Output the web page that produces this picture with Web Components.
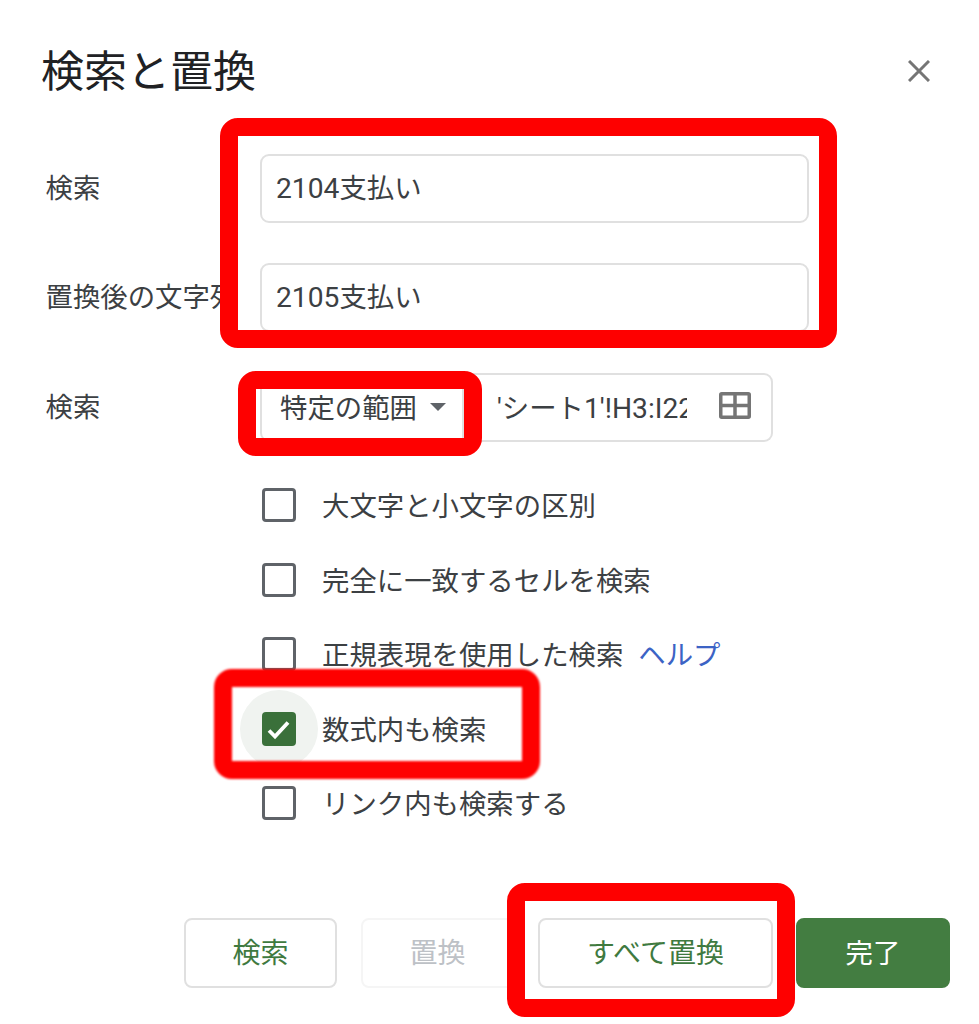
<!DOCTYPE html>
<html lang="ja">
<head>
<meta charset="utf-8">
<title>検索と置換</title>
<style>
html, body { margin: 0; background: #fff; }
body { font-family: Roboto, "Noto Sans CJK JP", sans-serif; font-size: 27.4px; color: #3c4043; }
</style>
</head>
<body>
<find-dialog>
  <span slot="title">検索と置換</span>

  <dlg-field label="検索"><text-box><span style="font-size:28.2px">2104</span>支払い</text-box></dlg-field>
  <dlg-field label="置換後の文字列"><text-box><span style="font-size:28.2px">2105</span>支払い</text-box></dlg-field>
  <dlg-field label="検索" style="margin-top:1px">
    <scope-select>特定の範囲</scope-select>
    <range-box>'シート<span style="font-size:28.2px">1'!H3:I22</span></range-box>
  </dlg-field>

  <check-row slot="checks">大文字と小文字の区別</check-row>
  <check-row slot="checks">完全に一致するセルを検索</check-row>
  <check-row slot="checks">正規表現を使用した検索<help-link>ヘルプ</help-link></check-row>
  <check-row slot="checks" checked>数式内も検索</check-row>
  <check-row slot="checks">リンク内も検索する</check-row>

  <act-button slot="actions" style="--w:153px">検索</act-button>
  <act-button slot="actions" style="--w:153px" kind="disabled">置換</act-button>
  <act-button slot="actions" style="--w:235px">すべて置換</act-button>
  <act-button slot="actions" style="--w:154px;margin-left:-1px" kind="primary">完了</act-button>

  <red-mark slot="marks" style="left:220px;top:118px;width:617px;height:230px"></red-mark>
  <red-mark slot="marks" style="left:238px;top:371px;width:244px;height:85px"></red-mark>
  <red-mark slot="marks" soft style="left:214px;top:669px;width:326px;height:110px"></red-mark>
  <red-mark slot="marks" style="left:507px;top:883px;width:288px;height:134px"></red-mark>
</find-dialog>

<script>
function shadow(el, html) {
  if (!el.shadowRoot) {
    el.attachShadow({ mode: "open" });
    el.shadowRoot.innerHTML = html;
  }
}

class FindDialog extends HTMLElement {
  connectedCallback() {
    shadow(this, `<style>
      :host { display: block; position: relative; z-index: 0; width: 979px; height: 1024px; overflow: hidden; background: #fff; }
      header { height: 154px; box-sizing: border-box; padding: 48px 49px 0 41px; display: flex; justify-content: space-between; align-items: flex-start; }
      h1 { margin: 0; font-size: 43px; line-height: 48px; font-weight: 400; color: #202124; }
      svg { margin-top: 12px; display: block; }
      .fields { display: flex; flex-direction: column; gap: 40px; padding-left: 45.5px; }
      .checks { margin-top: 26px; padding-left: 261px; display: flex; flex-direction: column; }
      .actions { margin-top: 77.5px; padding-right: 29px; display: flex; justify-content: flex-end; gap: 24px; }
    </style>
    <header>
      <h1><slot name="title"></slot></h1>
      <svg width="22" height="22" viewBox="0 0 22 22" fill="none" stroke="#757575" stroke-width="3"><path d="M1 1L21 21M21 1L1 21"/></svg>
    </header>
    <div class="fields"><slot></slot></div>
    <div class="checks"><slot name="checks"></slot></div>
    <div class="actions"><slot name="actions"></slot></div>
    <slot name="marks"></slot>`);
  }
}

class DlgField extends HTMLElement {
  connectedCallback() {
    shadow(this, `<style>
      :host { display: flex; align-items: center; height: 69px; }
      .label { flex: 0 0 214.5px; white-space: nowrap; margin-top: -6px; }
      .control { display: flex; flex: 1; }
    </style>
    <div class="label">${this.getAttribute("label")}</div>
    <div class="control"><slot></slot></div>`);
  }
}

class TextBox extends HTMLElement {
  connectedCallback() {
    shadow(this, `<style>
      :host { display: flex; align-items: baseline; align-content: center; flex-wrap: wrap; box-sizing: border-box; width: 549px; height: 69px; padding: 0 0 6px 14px; border: 2px solid #e0e0e0; border-radius: 9px; background: #fff; }
    </style><slot></slot>`);
  }
}

class ScopeSelect extends HTMLElement {
  connectedCallback() {
    shadow(this, `<style>
      :host { display: flex; align-items: center; box-sizing: border-box; width: 204px; height: 69px; padding: 0 0 4px 18px; gap: 13px; border: 2px solid #e0e0e0; border-radius: 9px 0 0 9px; color: #3c4043; }
      i { width: 0; height: 0; margin-top: 3px; border: 8px solid transparent; border-top-color: #5f6368; border-bottom: 0; }
    </style><slot></slot><i></i>`);
  }
}

class RangeBox extends HTMLElement {
  connectedCallback() {
    shadow(this, `<style>
      :host { display: flex; align-items: center; box-sizing: border-box; width: 309px; height: 69px; padding: 0 0 4px 33px; border: 2px solid #e0e0e0; border-left: 0; border-radius: 0 9px 9px 0; }
      .v { width: 190px; overflow: hidden; white-space: nowrap; }
      svg { margin-left: 32px; display: block; flex: none; }
    </style>
    <div class="v"><slot></slot></div>
    <svg width="32" height="27" viewBox="0 0 32 27" fill="none" stroke="#757575" stroke-width="3.5"><rect x="1.75" y="1.75" width="28.5" height="23.5" rx="1"/><path d="M1.75 13.5H30.25M16 1.75V25.25"/></svg>`);
  }
}

class CheckRow extends HTMLElement {
  connectedCallback() {
    const on = this.hasAttribute("checked");
    shadow(this, `<style>
      :host { display: flex; align-items: center; height: 74.5px; white-space: nowrap; }
      .box { position: relative; flex: none; width: 34px; height: 34px; margin: 0 26px 0 1px; box-sizing: border-box; border: 3.5px solid #5f6368; border-radius: 4px; }
      .box.on { border: 0; background: #3a703a; }
      .box.on::before { content: ""; position: absolute; left: -22px; top: -22px; width: 78px; height: 78px; border-radius: 50%; background: #f0f3f0; z-index: -1; }
      .text { padding-bottom: 2px; }
      svg { display: block; }
    </style>
    <div class="box ${on ? "on" : ""}">${on ? '<svg width="34" height="34" viewBox="0 0 34 34" fill="none" stroke="#fff" stroke-width="3.8"><path d="M7 18.5L13 24.5L26 10.5"/></svg>' : ""}</div>
    <div class="text"><slot></slot></div>`);
  }
}

class HelpLink extends HTMLElement {
  connectedCallback() {
    shadow(this, `<style>:host { display: inline; margin-left: 15px; color: #3c63c5; }</style><slot></slot>`);
  }
}

class ActButton extends HTMLElement {
  connectedCallback() {
    shadow(this, `<style>
      :host { display: flex; align-items: center; justify-content: center; box-sizing: border-box; width: var(--w); height: 70px; padding-bottom: 4px; border: 2px solid #e0e0e0; border-radius: 8px; font-size: 28px; color: #3f7a3f; background: #fff; }
      :host([kind="disabled"]) { border-color: #f5f5f5; color: #bdc1c6; }
      :host([kind="primary"]) { border-color: #437d41; background: #437d41; color: #fff; font-size: 27.4px; }
    </style><slot></slot>`);
  }
}

class RedMark extends HTMLElement {
  connectedCallback() {
    shadow(this, `<style>
      :host { display: block; position: absolute; box-sizing: border-box; border: 18px solid #fe0000; border-radius: 18px; z-index: 2; }
      :host([soft]) { filter: blur(1px); }
    </style>`);
  }
}

customElements.define("find-dialog", FindDialog);
customElements.define("dlg-field", DlgField);
customElements.define("text-box", TextBox);
customElements.define("scope-select", ScopeSelect);
customElements.define("range-box", RangeBox);
customElements.define("check-row", CheckRow);
customElements.define("help-link", HelpLink);
customElements.define("act-button", ActButton);
customElements.define("red-mark", RedMark);
</script>
</body>
</html>
